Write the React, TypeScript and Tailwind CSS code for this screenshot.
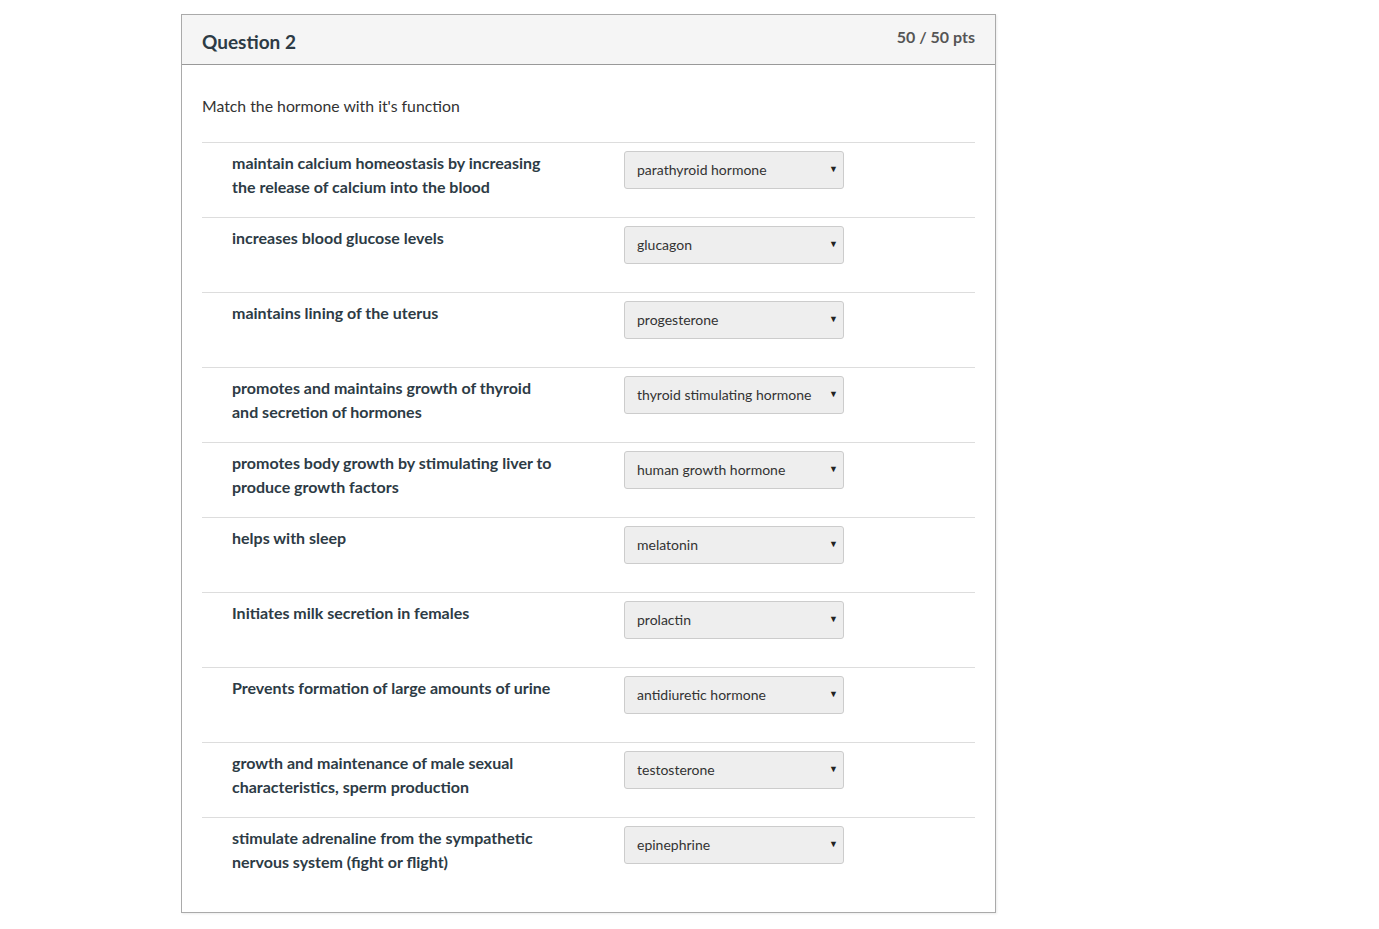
const rows: { text: string; answer: string }[] = [
  { text: 'maintain calcium homeostasis by increasing the release of calcium into the blood', answer: 'parathyroid hormone' },
  { text: 'increases blood glucose levels', answer: 'glucagon' },
  { text: 'maintains lining of the uterus', answer: 'progesterone' },
  { text: 'promotes and maintains growth of thyroid and secretion of hormones', answer: 'thyroid stimulating hormone' },
  { text: 'promotes body growth by stimulating liver to produce growth factors', answer: 'human growth hormone' },
  { text: 'helps with sleep', answer: 'melatonin' },
  { text: 'Initiates milk secretion in females', answer: 'prolactin' },
  { text: 'Prevents formation of large amounts of urine', answer: 'antidiuretic hormone' },
  { text: 'growth and maintenance of male sexual characteristics, sperm production', answer: 'testosterone' },
  { text: 'stimulate adrenaline from the sympathetic nervous system (fight or flight)', answer: 'epinephrine' },
];

function FakeSelect({ value }: { value: string }) {
  return (
    <div className="flex items-center justify-between w-[220px] h-[38px] pl-[12px] pr-[5px] pb-[2px] bg-[#eeeeee] border border-[#cccccc] rounded-[3px] text-[14px] text-[#333333]">
      <span>{value}</span>
      <span className="text-[9px] text-[#222]">▼</span>
    </div>
  );
}

export default function App() {
  return (
    <div className="min-h-screen bg-white font-['Lato','Noto_Sans',sans-serif] text-[#2d3b45]">
      <div className="pt-[14px] pl-[181px]">
        <div className="w-[815px] border border-[#aaaaaa] shadow-[1px_1px_2px_rgba(0,0,0,0.08)]">
          <div className="flex items-start justify-between h-[50px] bg-[#f5f5f5] border-b border-[#999999] px-5">
            <h2 className="pt-[14px] text-[19px] leading-[26px] font-bold text-[#2d3b45]">Question 2</h2>
            <span className="pt-[10px] text-[16px] leading-[24px] font-bold text-[#555555]">50 / 50 pts</span>
          </div>
          <div className="px-5 pt-[30px] pb-5">
            <p className="text-[15.8px] leading-[22px] mb-[25px] text-[#333333]">Match the hormone with it's function</p>
            {rows.map((r) => (
              <div key={r.answer} className="flex h-[75px] border-t border-[#dddddd] pt-2 pl-[30px]">
                <div className="w-[328px] text-[16px] leading-[24px] font-bold text-[#2d3b45]">{r.text}</div>
                <div className="ml-[64px]">
                  <FakeSelect value={r.answer} />
                </div>
              </div>
            ))}
          </div>
        </div>
      </div>
    </div>
  );
}
